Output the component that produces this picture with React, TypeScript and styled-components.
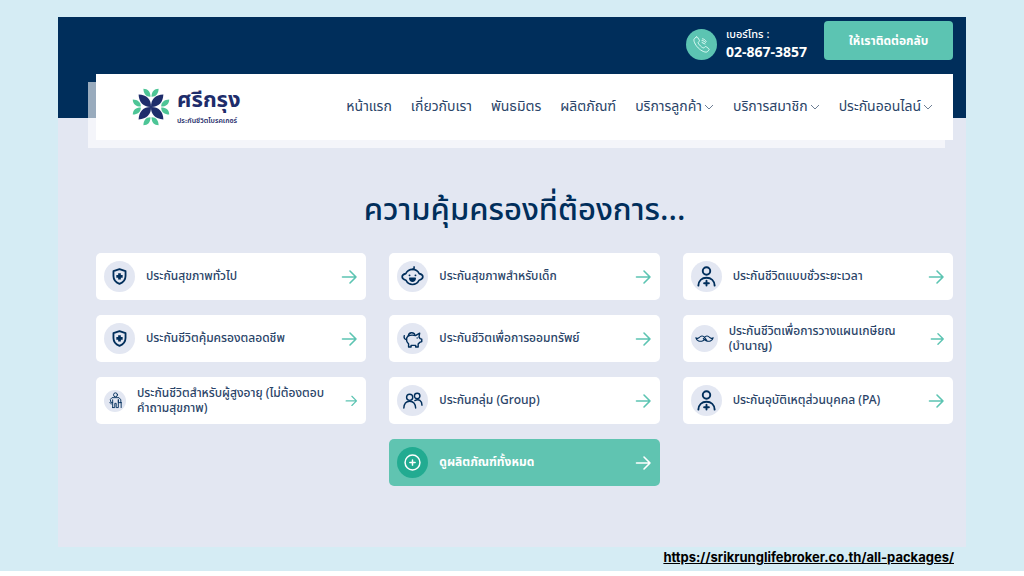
import React from "react";
import styled, { createGlobalStyle, css } from "styled-components";

const navy = "#002e5b";
const ink = "#2a4468";
const mint = "#5cc4b2";
const haze = "#e3e7f2";

const GlobalStyle = createGlobalStyle`
  * { box-sizing: border-box; }
  body {
    margin: 0;
    background: #ffffff;
    color: ${navy};
    font-family: "Noto Sans Thai", "Noto Sans", "Open Sans", sans-serif;
  }
  a { color: inherit; text-decoration: none; }
  svg { display: block; flex: none; }
`;

const Slide = styled.div`
  background: #d5ecf4;
  padding: 17px 58px 3px;
`;

const Site = styled.div`
  background: ${haze};
  padding-bottom: 61px;
`;

const TopBar = styled.header`
  background: ${navy};
  height: 101px;
  padding: 4px 13px 0 38px;
  display: flex;
  justify-content: flex-end;
  align-items: flex-start;
`;

const Contact = styled.div`
  display: flex;
  align-items: center;
  gap: 9px;
  margin: 5px 17px 0 0;
  color: #ffffff;
`;

const ContactText = styled.div`
  display: flex;
  flex-direction: column;
  font-size: 11px;
  line-height: 18px;
  font-weight: 500;
`;

const Phone = styled.a`
  font-size: 14px;
  font-weight: 700;
`;

const Disc = styled.span<{ $size?: number; $color?: string }>`
  flex: none;
  display: flex;
  align-items: center;
  justify-content: center;
  width: ${(p) => p.$size ?? 31}px;
  height: ${(p) => p.$size ?? 31}px;
  border-radius: 50%;
  background: ${(p) => p.$color ?? haze};
`;

const CallBack = styled.button`
  width: 129px;
  height: 39px;
  border: 0;
  border-radius: 4px;
  background: ${mint};
  color: #ffffff;
  font-family: inherit;
  font-size: 12px;
  font-weight: 700;
`;

const NavBar = styled.nav`
  position: relative;
  margin: -44px 13px 0 38px;
  height: 66px;
  padding: 0 20px 0 36px;
  display: flex;
  align-items: center;
  justify-content: space-between;
  background: #ffffff;
  box-shadow: -8px 8px 0 rgba(255, 255, 255, 0.6);
`;

const Brand = styled.a`
  display: flex;
  align-items: center;
  gap: 7px;
  color: #1e2d6b;
`;

const BrandText = styled.span`
  display: flex;
  flex-direction: column;
  white-space: nowrap;
`;

const BrandName = styled.span`
  font-size: 22px;
  line-height: 28px;
  font-weight: 700;
`;

const BrandLine = styled.span`
  font-size: 7px;
  line-height: 12px;
  font-weight: 600;
`;

const Menu = styled.ul`
  display: flex;
  gap: 19px;
  margin: 0;
  padding: 0;
  list-style: none;
`;

const MenuLink = styled.a`
  display: flex;
  align-items: center;
  gap: 2px;
  color: ${ink};
  font-size: 14px;
  line-height: 20px;
  font-weight: 400;
  white-space: nowrap;
`;

const Title = styled.h1`
  margin: 47px 13px 18px 38px;
  text-align: center;
  font-size: 31px;
  line-height: 48px;
  font-weight: 500;
`;

const Grid = styled.div`
  display: grid;
  grid-template-columns: repeat(3, minmax(0, 1fr));
  gap: 15px 23px;
  margin: 0 13px 0 38px;
`;

const Card = styled.a<{ $all?: boolean }>`
  display: flex;
  align-items: center;
  gap: 11px;
  height: 47px;
  padding: 0 8px;
  border-radius: 5px;
  background: #ffffff;
  color: ${ink};
  ${(p) =>
    p.$all &&
    css`
      grid-column: 2;
      background: #60c4b1;
      color: #ffffff;
    `}
`;

const Label = styled.span<{ $bold?: boolean }>`
  flex: 1;
  font-size: 12px;
  line-height: 15px;
  font-weight: ${(p) => (p.$bold ? 700 : 500)};
`;

const Source = styled.footer`
  display: flex;
  justify-content: flex-end;
  padding-right: 12px;
  color: #000000;
  font-family: Inter, sans-serif;
  font-size: 13px;
  line-height: 21px;
  font-weight: 700;
  a { text-decoration: underline; }
`;

const Arrow = ({ size = 17, color = mint }: { size?: number; color?: string }) => (
  <svg width={size} height={size} viewBox="0 0 17 17" fill="none" stroke={color} strokeWidth="1.6" strokeLinecap="round" strokeLinejoin="round">
    <path d="M1.500 9h13.500M9 3l6 6-6 6" />
  </svg>
);

const Chevron = () => (
  <svg width="10" height="6" viewBox="0 0 10 6" fill="none" stroke="#5c6f88" strokeWidth="0.9">
    <path d="M1 1l4 4 4-4" />
  </svg>
);

const PhoneIcon = () => (
  <svg width="19" height="19" viewBox="0 0 19 19" fill="none" stroke="#e8fffa" strokeWidth="0.9" strokeLinecap="round" strokeLinejoin="round">
    <path d="M4.2 2.1L2.4 3.6C.8 5.2 3.3 10 6.2 12.9s7.6 5.3 9.3 3.7l1.3-1.5c.5-.5.4-1-.1-1.5l-2.4-1.8c-.5-.4-1.1-.3-1.5.1l-1 1C10.700 13.700 5.600 8.500 6.200 7.400l.9-1c.4-.5.5-1 .1-1.500L5.500 2.300c-.3-.5-.9-.6-1.300-.2z" />
    <path d="M10 7.500l3 1.500M10 5.500c1.500.2 2.500.8 3.500 2M10.500 3.800c1.600.2 3 1.200 3.700 2.700" />
  </svg>
);

const LogoMark = () => (
  <svg width="38" height="38" viewBox="0 0 38 38">
    <g fill="#1e2d6b">
      {[0, 90, 180, 270].map((a) => (
        <path key={a} transform={`rotate(${a} 19 19)`} d="M19 19C11.500 19.200 7 14.800 6.600 6.600C14.800 7 19.200 11.500 19 19z" />
      ))}
    </g>
    <g fill="#4dc596">
      {[0, 90, 180, 270].map((a) => (
        <g key={a} transform={`rotate(${a} 19 19)`}>
          <path d="M18.500 8.800C14 9 11.500 5.500 11.400 .8C16 .8 18.500 3.800 18.500 8.800z" />
          <path d="M19.500 8.800C24 9 26.500 5.500 26.600 .8C22 .8 19.500 3.800 19.500 8.800z" />
        </g>
      ))}
    </g>
  </svg>
);

type IconName = "shield" | "baby" | "person" | "piggy" | "moustache" | "elder" | "group" | "plus";

const drawings: Record<IconName, React.ReactNode> = {
  shield: (
    <>
      <path d="M12 4.300l6.300 2.200v5c0 4-2.600 6.700-6.300 8.200-3.700-1.500-6.300-4.200-6.300-8.200v-5z" strokeWidth="1.900" />
      <path d="M12 8.500v6.600M8.700 11.800h6.600" strokeWidth="2.800" strokeLinecap="butt" />
    </>
  ),
  baby: (
    <>
      <path d="M12 4.600c3.300 0 5.700 1.700 7 4.400 2.200.5 3.800 1.600 3.800 3.300s-1.600 3-3.900 3.600c-1.400 2.800-3.800 4.500-6.900 4.500s-5.500-1.700-6.900-4.500c-2.300-.6-3.900-1.900-3.900-3.600S2.800 9.500 5 9c1.300-2.700 3.700-4.400 7-4.400z" />
      <path d="M12 4.500c1.400-.1 2-1 1.600-2.500" />
      <path d="M8.800 10.800h.2M15 10.800h.2" strokeWidth="1.800" />
      <path d="M9.200 14h5.600c-.2 1.800-1.200 2.800-2.800 2.800s-2.600-1-2.800-2.800z" fill={navy} />
    </>
  ),
  person: (
    <>
      <circle cx="12" cy="6.300" r="3.900" strokeWidth="2" />
      <path d="M3.500 21.500C3.700 16.500 7.200 13.300 12 13.300s8.300 3.200 8.500 8.200M12 16.500v5M9.500 19h5" strokeWidth="2" />
    </>
  ),
  piggy: (
    <>
      <path d="M6 8.500c2.500-1.200 5.500-1.500 9-.6L20 5l-.8 4.600 1.300 2 2 .5v3l-2.500 1-1.800 2V21.500h-3v-1.900H9.700v1.900h-3v-3.700C3.500 15.500 3.500 11 6 8.500z" />
      <path d="M6.500 8a4 4 0 0 1 7.800-.7M4.300 12.800C2 12.700 .8 10.800 1.500 8M17 10.800v.1" />
    </>
  ),
  moustache: (
    <path d="M12 10.500c-1.600-2.400-4.600-2.300-6.500.2C4.300 12.200 3 12.200 1 11c.8 4 5.500 5.500 9 3.800l2-1.500 2 1.500c3.500 1.700 8.200.2 9-3.800-2 1.200-3.300 1.200-4.500-.3-1.900-2.500-4.900-2.600-6.500-.2zM12 10.500l3 4M12 13.300l-1.500-1.500" strokeWidth="1.400" />
  ),
  elder: (
    <g strokeWidth="1.300">
      <circle cx="12" cy="4" r="2.800" />
      <path d="M8 22v-7l-2.500-.5-.8-4L7 8h10l2.500 3v4M8 11v4M16 11v11h-3v-6h-2v6H8M16 11v4h4M20 15v7M4 15c1.200 0 2 .7 2 2" />
    </g>
  ),
  group: (
    <>
      <circle cx="8" cy="7.500" r="3.700" />
      <circle cx="17" cy="6" r="3.300" />
      <path d="M1 20.500c.2-5.300 2.700-8.300 7-8.300s6.900 3 7.200 8.300M14.200 11.500c4.700-2.500 8.400 0 8.600 5.500" />
    </>
  ),
  plus: (
    <>
      <circle cx="12" cy="12" r="8.500" />
      <path d="M12 9v6M9 12h6" />
    </>
  ),
};

const Icon = ({ name, size, color = navy }: { name: IconName; size: number; color?: string }) => (
  <svg width={size} height={size} viewBox="0 0 24 24" fill="none" stroke={color} strokeWidth="1.700" strokeLinecap="round" strokeLinejoin="round">
    {drawings[name]}
  </svg>
);

const menu = [
  { text: "หน้าแรก" },
  { text: "เกี่ยวกับเรา" },
  { text: "พันธมิตร" },
  { text: "ผลิตภัณฑ์" },
  { text: "บริการลูกค้า", more: true },
  { text: "บริการสมาชิก", more: true },
  { text: "ประกันออนไลน์", more: true },
];

const products: { text: string; icon: IconName; glyph?: number; disc?: number; arrow?: number }[] = [
  { text: "ประกันสุขภาพทั่วไป", icon: "shield" },
  { text: "ประกันสุขภาพสำหรับเด็ก", icon: "baby" },
  { text: "ประกันชีวิตแบบชั่วระยะเวลา", icon: "person" },
  { text: "ประกันชีวิตคุ้มครองตลอดชีพ", icon: "shield" },
  { text: "ประกันชีวิตเพื่อการออมทรัพย์", icon: "piggy", glyph: 20 },
  { text: "ประกันชีวิตเพื่อการวางแผนเกษียณ (บำนาญ)", icon: "moustache", glyph: 19, disc: 27, arrow: 15 },
  { text: "ประกันชีวิตสำหรับผู้สูงอายุ (ไม่ต้องตอบคำถามสุขภาพ)", icon: "elder", glyph: 17, disc: 22, arrow: 13 },
  { text: "ประกันกลุ่ม (Group)", icon: "group", glyph: 20 },
  { text: "ประกันอุบัติเหตุส่วนบุคคล (PA)", icon: "person" },
];

export default function App() {
  return (
    <>
      <GlobalStyle />
      <Slide>
        <Site>
          <TopBar>
            <Contact>
              <Disc $color={mint}>
                <PhoneIcon />
              </Disc>
              <ContactText>
                <span>เบอร์โทร :</span>
                <Phone href="tel:028673857">02-867-3857</Phone>
              </ContactText>
            </Contact>
            <CallBack type="button">ให้เราติดต่อกลับ</CallBack>
          </TopBar>
          <NavBar>
            <Brand href="#">
              <LogoMark />
              <BrandText>
                <BrandName>ศรีกรุง</BrandName>
                <BrandLine>ประกันชีวิตโบรคเกอร์</BrandLine>
              </BrandText>
            </Brand>
            <Menu>
              {menu.map((m) => (
                <li key={m.text}>
                  <MenuLink href="#">
                    {m.text}
                    {m.more && <Chevron />}
                  </MenuLink>
                </li>
              ))}
            </Menu>
          </NavBar>
          <main>
            <Title>ความคุ้มครองที่ต้องการ...</Title>
            <Grid>
              {products.map((p) => (
                <Card key={p.text} href="#">
                  <Disc $size={p.disc}>
                    <Icon name={p.icon} size={p.glyph ?? 23} />
                  </Disc>
                  <Label>{p.text}</Label>
                  <Arrow size={p.arrow} />
                </Card>
              ))}
              <Card href="#" $all>
                <Disc $color="#22ab91">
                  <Icon name="plus" size={21} color="#ffffff" />
                </Disc>
                <Label $bold>ดูผลิตภัณฑ์ทั้งหมด</Label>
                <Arrow color="#ffffff" />
              </Card>
            </Grid>
          </main>
        </Site>
        <Source>
          <a href="https://srikrunglifebroker.co.th/all-packages/">https://srikrunglifebroker.co.th/all-packages/</a>
        </Source>
      </Slide>
    </>
  );
}
